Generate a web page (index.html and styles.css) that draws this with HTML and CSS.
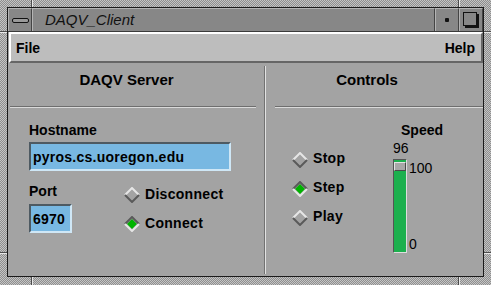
FILE: index.html
```html
<!DOCTYPE html>
<html lang="en">
<head>
  <meta charset="UTF-8">
  <title>DAQV_Client</title>
  <link rel="stylesheet" href="styles.css">
</head>
<body>
  <div class="frame">
    <span class="mark mark-top mark-l"></span>
    <span class="mark mark-top mark-r"></span>
    <span class="mark mark-bottom mark-l"></span>
    <span class="mark mark-bottom mark-r"></span>
    <span class="mark mark-left mark-t"></span>
    <span class="mark mark-left mark-b"></span>
    <span class="mark mark-right mark-t"></span>
    <span class="mark mark-right mark-b"></span>

    <div class="window">
      <div class="titlebar">
        <div class="tb-btn"><span class="bar"></span></div>
        <div class="title">DAQV_Client</div>
        <div class="tb-btn"><span class="dot"></span></div>
        <div class="tb-btn"><span class="box"></span></div>
      </div>

      <div class="menubar">
        <span>File</span>
        <span>Help</span>
      </div>

      <div class="content">
        <section class="panel server">
          <h2 class="panel-title">DAQV Server</h2>
          <div class="sep"></div>

          <div class="field-label">Hostname</div>
          <div class="textfield host">pyros.cs.uoregon.edu</div>

          <div class="port-row">
            <div class="port-col">
              <div class="field-label">Port</div>
              <div class="textfield port">6970</div>
            </div>
            <div class="radios">
              <div class="radio">
                <svg width="16" height="16" viewBox="0 0 16 16">
                  <path d="M1 8 L8 1 L15 8" class="hi"/>
                  <path d="M1 8 L8 15 L15 8" class="lo"/>
                </svg>
                <span>Disconnect</span>
              </div>
              <div class="radio on">
                <svg width="16" height="16" viewBox="0 0 16 16">
                  <polygon points="8,3 13,8 8,13 3,8" class="fill"/>
                  <path d="M1 8 L8 1 L15 8" class="lo"/>
                  <path d="M1 8 L8 15 L15 8" class="hi"/>
                </svg>
                <span>Connect</span>
              </div>
            </div>
          </div>
        </section>

        <div class="divider"></div>

        <section class="panel controls">
          <h2 class="panel-title">Controls</h2>
          <div class="sep"></div>

          <div class="controls-body">
            <div class="radios play-modes">
              <div class="radio">
                <svg width="16" height="16" viewBox="0 0 16 16">
                  <path d="M1 8 L8 1 L15 8" class="hi"/>
                  <path d="M1 8 L8 15 L15 8" class="lo"/>
                </svg>
                <span>Stop</span>
              </div>
              <div class="radio on">
                <svg width="16" height="16" viewBox="0 0 16 16">
                  <polygon points="8,3 13,8 8,13 3,8" class="fill"/>
                  <path d="M1 8 L8 1 L15 8" class="lo"/>
                  <path d="M1 8 L8 15 L15 8" class="hi"/>
                </svg>
                <span>Step</span>
              </div>
              <div class="radio">
                <svg width="16" height="16" viewBox="0 0 16 16">
                  <path d="M1 8 L8 1 L15 8" class="hi"/>
                  <path d="M1 8 L8 15 L15 8" class="lo"/>
                </svg>
                <span>Play</span>
              </div>
            </div>

            <div class="speed">
              <div class="speed-label">Speed</div>
              <div class="speed-value">96</div>
              <div class="scale-row">
                <div class="trough"><div class="thumb"></div></div>
                <div class="scale-ticks">
                  <span>100</span>
                  <span>0</span>
                </div>
              </div>
            </div>
          </div>
        </section>
      </div>
    </div>
  </div>
</body>
</html>
```

FILE: styles.css
```css
body {
  margin: 0;
  font-family: "Liberation Sans", Helvetica, Arial, sans-serif;
  font-size: 14px;
  line-height: 16px;
  color: #000;
}

.frame {
  position: relative;
  width: 491px;
  height: 285px;
  box-sizing: border-box;
  padding: 7px 7px 8px 7px;
  background: repeating-conic-gradient(#8e8e8e 0 25%, #c4c4c4 0 50%) 0 0 / 2px 2px;
}

/* corner notches of the window frame */
.mark {
  position: absolute;
  box-sizing: border-box;
}

.mark-top, .mark-bottom {
  width: 2px;
  height: 7px;
  border-left: 1px solid #4c4c4c;
  border-right: 1px solid #e8e8e8;
}

.mark-left, .mark-right {
  width: 7px;
  height: 2px;
  border-top: 1px solid #4c4c4c;
  border-bottom: 1px solid #e8e8e8;
}

.mark-top { top: 0; }
.mark-bottom { bottom: 0; height: 8px; }
.mark-left { left: 0; }
.mark-right { right: 0; }
.mark-top.mark-l, .mark-bottom.mark-l { left: 31px; }
.mark-top.mark-r, .mark-bottom.mark-r { left: 458px; }
.mark-left.mark-t, .mark-right.mark-t { top: 31px; }
.mark-left.mark-b, .mark-right.mark-b { top: 252px; }

.window {
  height: 100%;
  box-sizing: border-box;
  border: 1px solid #1a1a1a;
  background-color: #a3a3a3;
  display: flex;
  flex-direction: column;
}

/* title bar */
.titlebar {
  height: 24px;
  box-sizing: border-box;
  display: flex;
  background-color: #878787;
  border-bottom: 1px solid #3a3a3a;
}

.tb-btn {
  width: 24px;
  box-sizing: border-box;
  border-left: 1px solid #b4b4b4;
  border-top: 1px solid #b4b4b4;
  border-right: 1px solid #444;
  display: flex;
  align-items: center;
  justify-content: center;
}

.tb-btn .bar {
  width: 17px;
  height: 5px;
  box-sizing: border-box;
  border: 1px solid #111;
  border-radius: 2px;
  background-color: #9a9a9a;
}

.tb-btn .dot {
  width: 4px;
  height: 4px;
  background-color: #111;
  border-radius: 1px;
}

.tb-btn .box {
  width: 14px;
  height: 14px;
  box-sizing: border-box;
  border: 1px solid #111;
  box-shadow: 2px 2px 0 #111;
  margin: -2px 0 0 -2px;
}

.title {
  flex: 1;
  padding-left: 12px;
  display: flex;
  align-items: center;
  font-style: italic;
  font-size: 15px;
  color: #111;
  border-left: 1px solid #b4b4b4;
  border-top: 1px solid #b4b4b4;
  border-right: 1px solid #444;
}

/* menu bar */
.menubar {
  height: 31px;
  box-sizing: border-box;
  margin-left: 1px;
  display: flex;
  justify-content: space-between;
  align-items: center;
  padding: 0 6px 0 5px;
  background-color: #bdbdbd;
  border-top: 2px solid #fff;
  border-left: 2px solid #fff;
  border-bottom: 2px solid #666;
  border-right: 2px solid #666;
  font-weight: bold;
}

/* panels */
.content {
  flex: 1;
  display: flex;
}

.panel {
  display: flex;
  flex-direction: column;
}

.server { width: 256px; }
.controls { width: 217px; }

.divider {
  width: 2px;
  box-sizing: border-box;
  margin: 3px 0 2px;
  border-left: 1px solid #727272;
  border-right: 1px solid #e2e2e2;
}

.panel-title {
  margin: 9px 0 0;
  font-size: 15px;
  line-height: 16px;
  text-align: center;
}

.server .panel-title { padding-right: 19px; }
.controls .panel-title { padding-right: 15px; }

.sep {
  height: 2px;
  box-sizing: border-box;
  margin-top: 18px;
  border-top: 1px solid #6e6e6e;
  border-bottom: 1px solid #dadada;
}

.server .sep { margin-left: 2px; margin-right: 8px; }
.controls .sep { margin-left: 9px; }

.field-label {
  font-weight: bold;
}

.server > .field-label {
  margin: 14px 0 0 21px;
}

.textfield {
  height: 29px;
  box-sizing: border-box;
  padding-left: 2px;
  display: flex;
  align-items: center;
  background-color: #78b8e2;
  border-top: 2px solid #4e5a62;
  border-left: 2px solid #4e5a62;
  border-bottom: 2px solid #cfe7f6;
  border-right: 2px solid #cfe7f6;
  font-weight: bold;
  letter-spacing: 0.25px;
}

.textfield.host {
  width: 202px;
  margin: 4px 0 0 21px;
}

.textfield.port {
  width: 43px;
  margin-top: 5px;
}

.port-row {
  display: flex;
  margin: 12px 0 0 21px;
}

.port-col {
  width: 95px;
}

/* radio buttons */
.radios {
  display: flex;
  flex-direction: column;
  gap: 12px;
  margin-top: 3px;
}

.radio {
  display: flex;
  align-items: flex-start;
  gap: 5px;
  font-weight: bold;
  letter-spacing: 0.3px;
}

.radio svg {
  margin-top: 1px;
}

.radio path {
  fill: none;
  stroke-width: 2;
}

.radio .hi { stroke: #e6e6e6; }
.radio .lo { stroke: #5a5a5a; }
.radio .fill { fill: #00b400; }

/* controls */
.controls-body {
  display: flex;
}

.play-modes {
  width: 101px;
  margin: 42px 0 0 26px;
  gap: 11px;
}

.play-modes .radio svg {
  margin-top: 2px;
}

.speed {
  margin-top: 14px;
}

.speed-label {
  margin-left: 8px;
  font-weight: bold;
}

.speed-value {
  margin-top: 2px;
}

.scale-row {
  display: flex;
  margin-top: 3px;
}

.trough {
  width: 14px;
  height: 94px;
  box-sizing: border-box;
  background-color: #1cb04e;
  border-top: 1px solid #555;
  border-left: 1px solid #555;
  border-bottom: 1px solid #dedede;
  border-right: 1px solid #dedede;
}

.thumb {
  width: 12px;
  height: 9px;
  box-sizing: border-box;
  margin-top: 2px;
  background-color: #a8a8a8;
  border-top: 1px solid #e4e4e4;
  border-left: 1px solid #e4e4e4;
  border-bottom: 1px solid #4a4a4a;
  border-right: 1px solid #4a4a4a;
}

.scale-ticks {
  height: 94px;
  box-sizing: border-box;
  padding: 1px 0 1px 2px;
  display: flex;
  flex-direction: column;
  justify-content: space-between;
}
```
